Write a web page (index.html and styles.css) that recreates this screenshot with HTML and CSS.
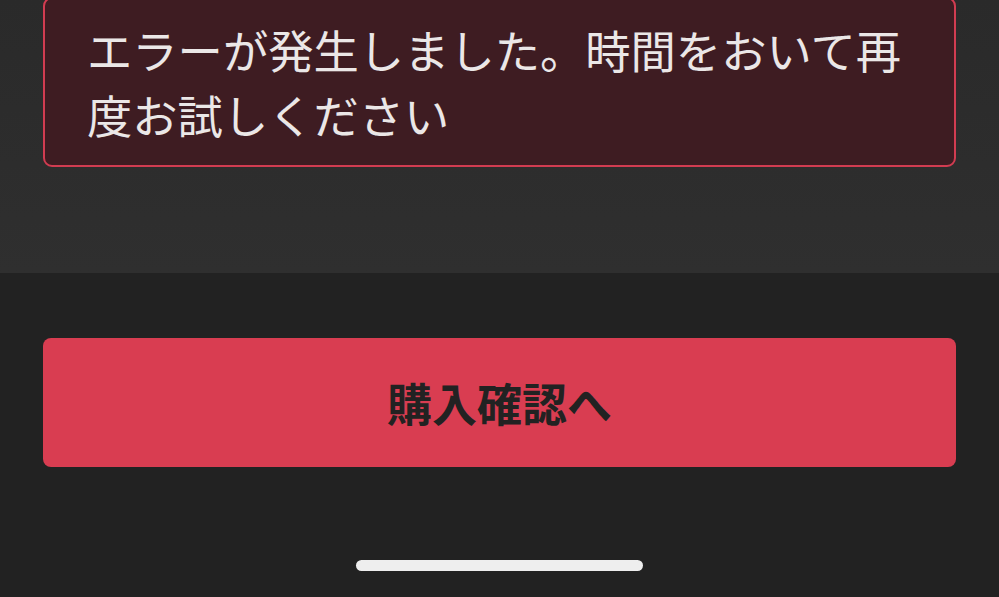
FILE: index.html
```html
<!DOCTYPE html>
<html lang="ja">
<head>
<meta charset="utf-8">
<link rel="stylesheet" href="styles.css">
</head>
<body>
<div class="top">
  <div class="error">エラーが発生しました。時間をおいて再度お試しください</div>
</div>
<div class="bottom">
  <button class="cta">購入確認へ</button>
  <div class="home"></div>
</div>
</body>
</html>
```
FILE: styles.css
```css
html, body {
  margin: 0;
  padding: 0;
  width: 999px;
  height: 597px;
  overflow: hidden;
  background: #222222;
  font-family: "Noto Sans CJK JP", "Noto Sans", sans-serif;
}
.top {
  display: flow-root;
  height: 273px;
  background: linear-gradient(#2a2a2a, #2f2f2f);
  padding: 0 43px;
  box-sizing: border-box;
}
.error {
  margin-top: -3px;
  border: 2px solid #d23c51;
  border-radius: 9px;
  background: #3e1c22;
  color: #ebe7e7;
  font-size: 45.3px;
  line-height: 65px;
  padding: 18px 40px 18px 42px;
}
.bottom {
  height: 324px;
  display: flex;
  flex-direction: column;
  align-items: center;
  padding: 65px 43px 0;
  box-sizing: border-box;
}
.cta {
  width: 913px;
  height: 129px;
  border: none;
  border-radius: 8px;
  background: #d93d51;
  color: #222222;
  font-family: "Noto Sans CJK JP", "Noto Sans", sans-serif;
  font-weight: 700;
  font-size: 45px;
  padding: 0;
  line-height: 1;
}
.home {
  margin-top: 93px;
  width: 287px;
  height: 11px;
  border-radius: 6px;
  background: #eeeeee;
}
```
